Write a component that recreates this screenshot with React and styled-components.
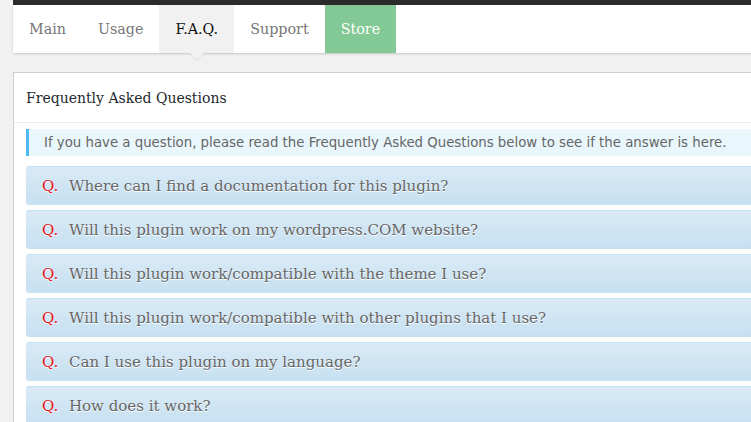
import React from "react";
import styled, { createGlobalStyle } from "styled-components";

const GlobalStyle = createGlobalStyle`
  html, body {
    margin: 0;
    padding: 0;
    background: #f1f1f1;
    overflow: hidden;
  }
`;

const questions = [
  "Where can I find a documentation for this plugin?",
  "Will this plugin work on my wordpress.COM website?",
  "Will this plugin work/compatible with the theme I use?",
  "Will this plugin work/compatible with other plugins that I use?",
  "Can I use this plugin on my language?",
  "How does it work?",
];

const tabs = ["Main", "Usage", "F.A.Q.", "Support", "Store"];

const App = () => {
  return (
    <Page>
      <GlobalStyle />
      <TopBar />
      <Tabs>
        {tabs.map((t) => (
          <Tab key={t} active={t === "F.A.Q."} store={t === "Store"}>
            {t}
          </Tab>
        ))}
      </Tabs>
      <Panel>
        <PanelHeader>Frequently Asked Questions</PanelHeader>
        <PanelBody>
          <Notice>
            If you have a question, please read the Frequently Asked Questions
            below to see if the answer is here.
          </Notice>
          {questions.map((q) => (
            <Question key={q}>
              <QMark>Q.</QMark>
              <span>{q}</span>
            </Question>
          ))}
        </PanelBody>
      </Panel>
    </Page>
  );
};

const Page = styled.div`
  width: 800px;
  padding-left: 13px;
  font-family: "DejaVu Serif", Georgia, serif;
`;

const TopBar = styled.div`
  height: 5px;
  background: #2b2b2b;
`;

const Tabs = styled.div`
  display: flex;
  height: 48px;
  background: #fff;
  box-shadow: 0 1px 2px rgba(0, 0, 0, 0.18);
`;

const Tab = styled.div`
  position: relative;
  display: flex;
  align-items: center;
  padding: 0 16px;
  font-size: 14.3px;
  color: ${(p) => (p.active ? "#111" : p.store ? "#fff" : "#777")};
  background: ${(p) => (p.active ? "#f1f1f1" : p.store ? "#82c995" : "#fff")};
  ${(p) =>
    p.active &&
    `
    &::after {
      content: "";
      position: absolute;
      left: 50%;
      bottom: -7px;
      margin-left: -7px;
      border-left: 7px solid transparent;
      border-right: 7px solid transparent;
      border-top: 7px solid #f1f1f1;
      filter: drop-shadow(0 1px 0 rgba(0, 0, 0, 0.08));
    }
  `}
`;

const Panel = styled.div`
  margin-top: 19px;
  background: #fff;
  border: 1px solid #ccd0d4;
`;

const PanelHeader = styled.div`
  height: 49px;
  display: flex;
  align-items: center;
  padding-left: 12px;
  font-size: 14px;
  color: #23282d;
  border-bottom: 1px solid #eee;
`;

const PanelBody = styled.div`
  padding: 6px 12px;
`;

const Notice = styled.div`
  height: 27px;
  display: flex;
  align-items: center;
  padding-left: 15px;
  margin-bottom: 10px;
  border-left: 3px solid #4fb9f3;
  background: #e9f6fc;
  font-family: "DejaVu Sans", Verdana, sans-serif;
  font-size: 13.3px;
  color: #666;
`;

const Question = styled.div`
  display: flex;
  align-items: center;
  height: 38px;
  margin-bottom: 5px;
  padding-left: 16px;
  border-radius: 3px;
  border-top: 1px solid #bfe3f3;
  background: linear-gradient(#d9eaf6, #c6e0f1);
  font-size: 15px;
  color: #666;
  text-shadow: 0 1px 0 #fff;
`;

const QMark = styled.span`
  width: 27px;
  color: #e8101a;
`;

export default App;
